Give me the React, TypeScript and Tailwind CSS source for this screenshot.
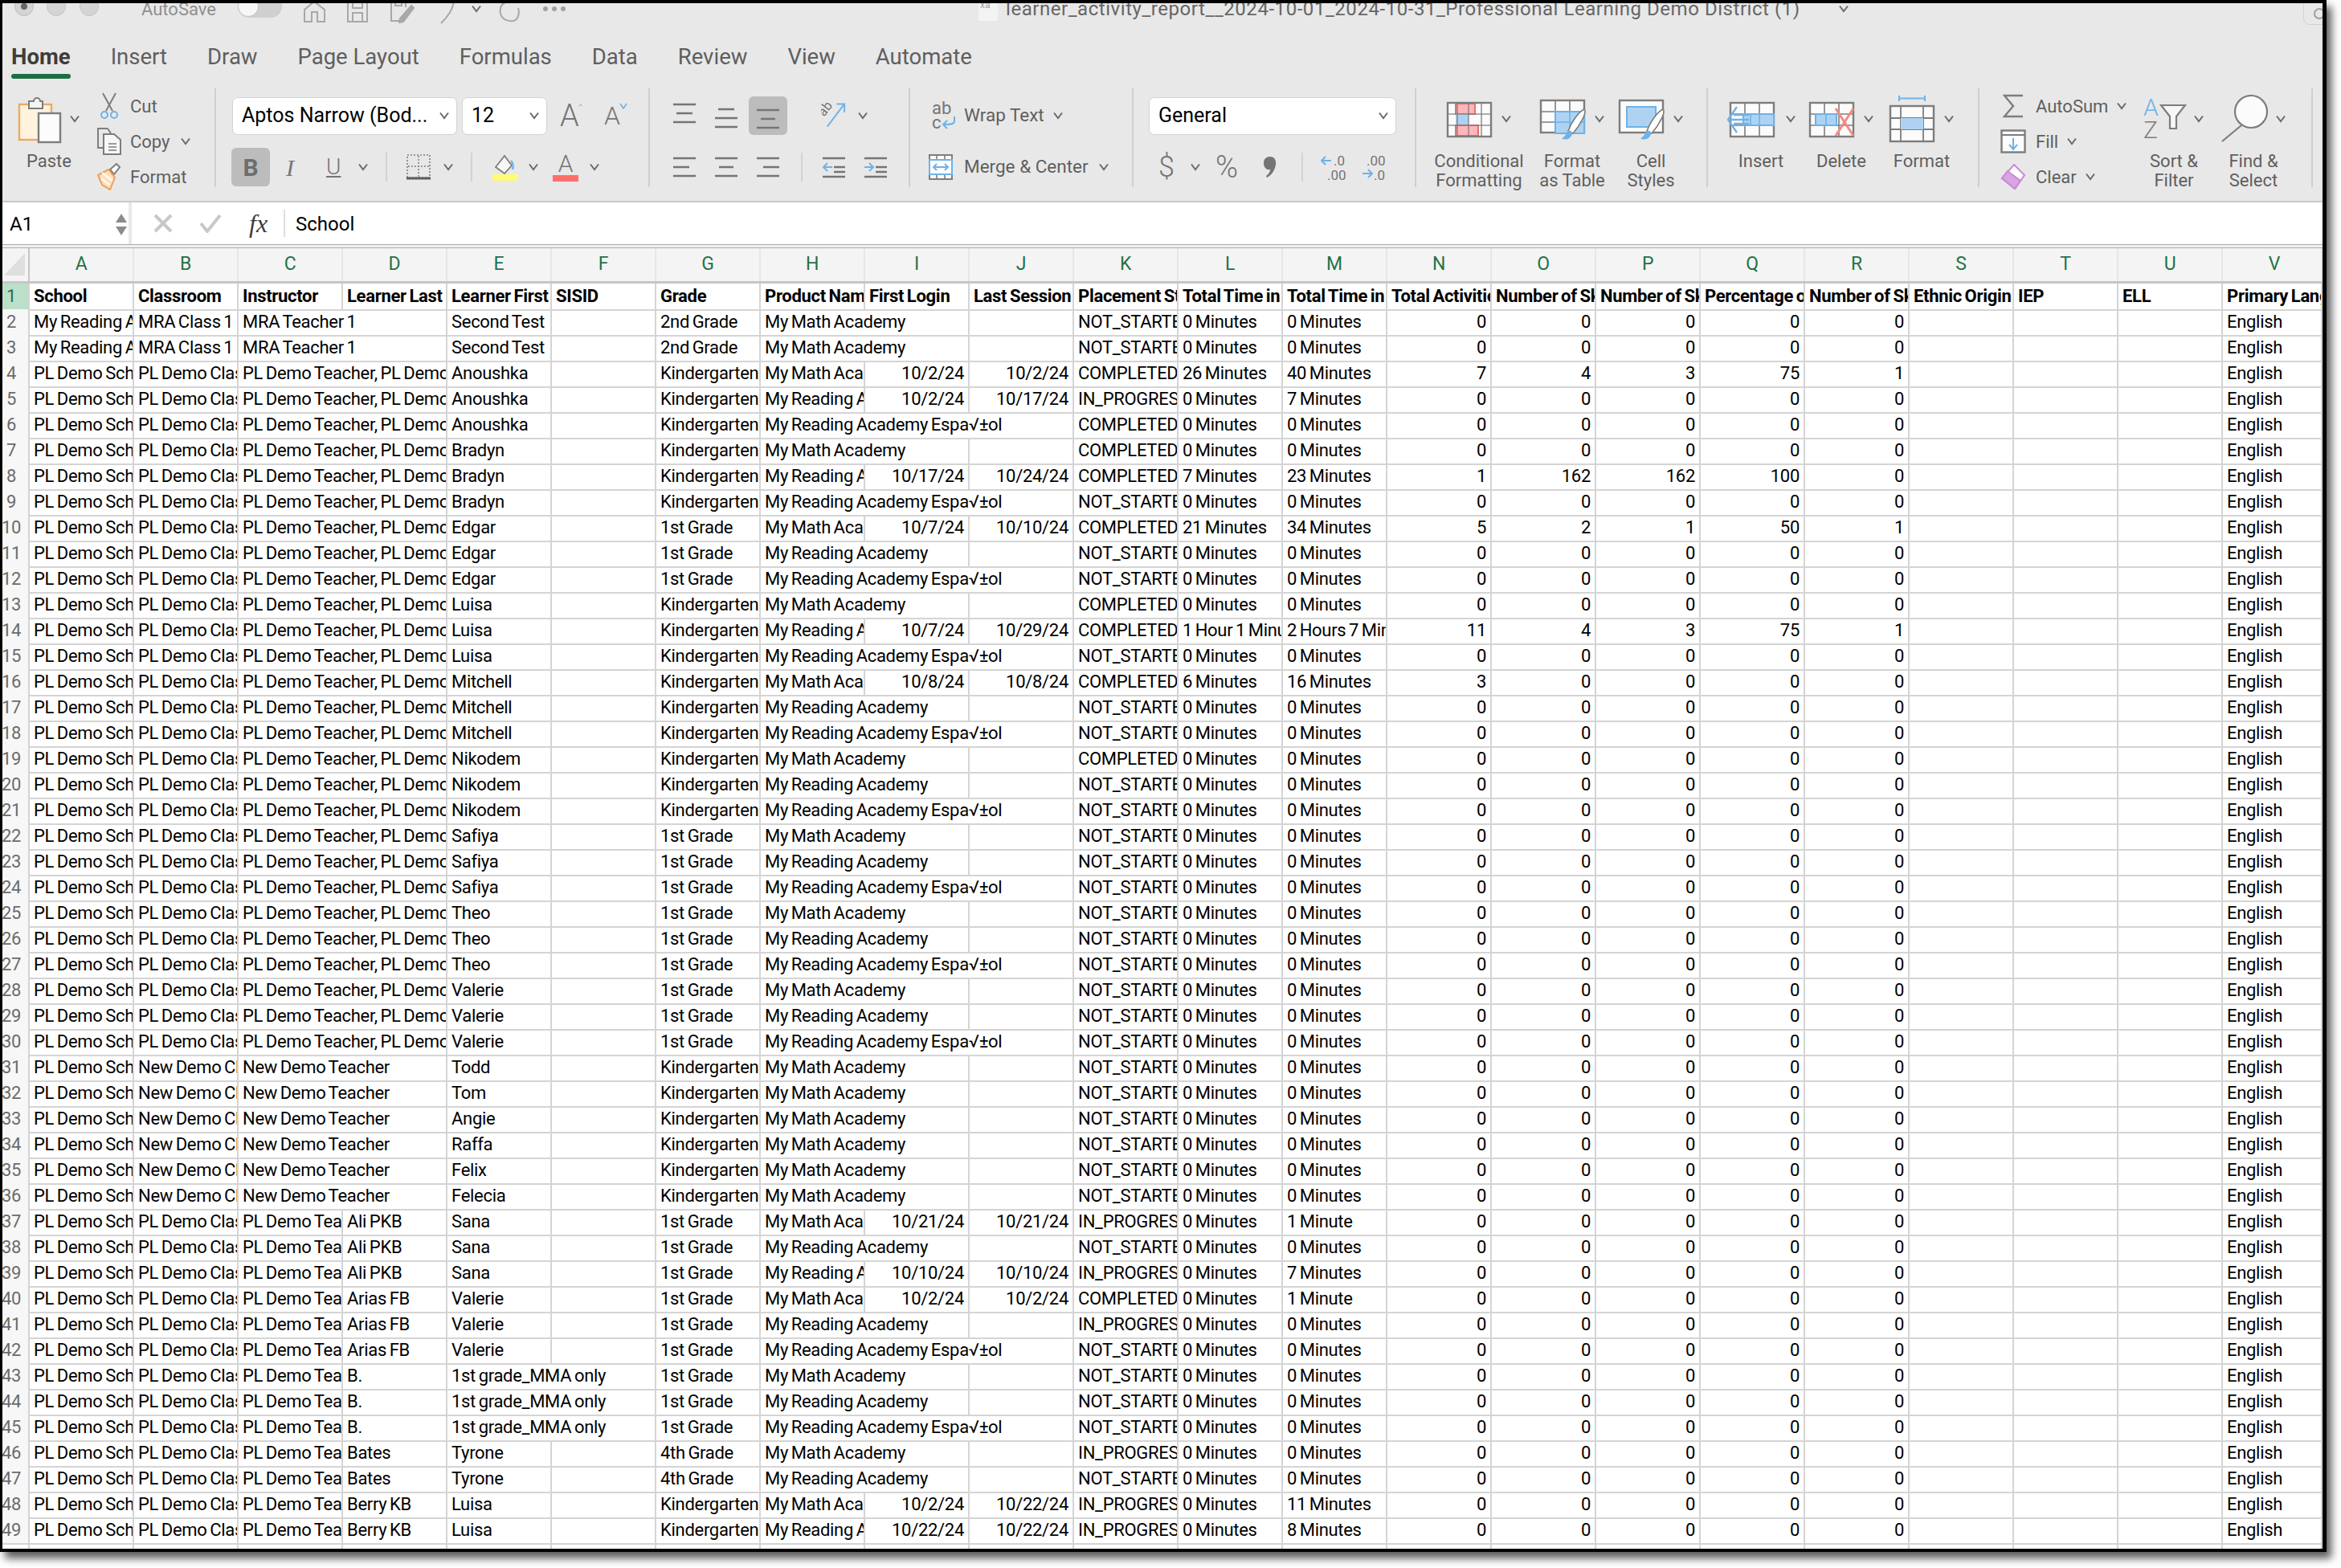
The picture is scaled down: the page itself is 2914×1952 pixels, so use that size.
import React from "react";

const G = "#7d7d7d";
const BL = "#6fb2e6";
const LB = "#aed3f2";

function Chev({ className = "" }: { className?: string }) {
  return (
    <svg viewBox="0 0 14 10" className={`w-[14px] h-[10px] shrink-0 ${className}`} fill="none" stroke="#6b6b6b" strokeWidth="2">
      <path d="M2 1.5 L7 8 L12 1.5" />
    </svg>
  );
}

function VSep({ className = "" }: { className?: string }) {
  return <div className={`w-[2px] h-[36px] bg-[#d2d2d2] shrink-0 ${className}`} />;
}

function Lines({ w = 28, top, mid, bot }: { w?: number; top: [number, number]; mid: [number, number]; bot: [number, number] }) {
  return (
    <svg viewBox="0 0 28 28" width={w} height="28" stroke="#757575" strokeWidth="2.4">
      <path d={`M${top[0]} 3H${top[1]}M${mid[0]} 14H${mid[1]}M${bot[0]} 25H${bot[1]}`} />
    </svg>
  );
}

function GridBase({ children, cols = [14, 28, 42], rows = [14, 28] }: { children?: React.ReactNode; cols?: number[]; rows?: number[] }) {
  return (
    <svg viewBox="0 0 60 50" width="60" height="50" className="shrink-0">
      <rect x="2" y="5" width="54" height="42" fill="#fbfbfb" />
      {children}
      <rect x="2" y="5" width="54" height="42" fill="none" stroke={G} strokeWidth="2.4" />
      {cols.map((c) => (
        <path key={c} d={`M${c + 2} 5V47`} stroke={G} strokeWidth="1.6" opacity="0.8" />
      ))}
      {rows.map((r) => (
        <path key={r} d={`M2 ${r + 5}H56`} stroke={G} strokeWidth="1.6" opacity="0.8" />
      ))}
    </svg>
  );
}

function Brush() {
  return (
    <g>
      <path d="M56 17 C60 20 51 37 42 47 L36 44 C40 33 49 20 56 17Z" fill="#fff" stroke={G} strokeWidth="1.6" />
      <path d="M36 44 C40 43 42 46 41 48 C39 55 31 56 28 53 C33 51 33 47 36 44Z" fill={BL} />
    </g>
  );
}

function CondIcon() {
  return (
    <GridBase cols={[12, 26, 42]}>
      <rect x="12" y="6" width="24" height="13" fill="#ffb6bb" stroke="#e6706a" strokeWidth="2" />
      <rect x="12" y="19" width="16" height="14" fill={LB} />
      <rect x="12" y="33" width="28" height="13" fill="#ffb6bb" stroke="#e6706a" strokeWidth="2" />
    </GridBase>
  );
}
function TableIcon() {
  return (
    <svg viewBox="0 0 60 58" width="60" height="58" className="shrink-0">
      <rect x="2" y="6" width="54" height="40" fill="#fbfbfb" stroke={G} strokeWidth="2.4" />
      <path d="M20 6V46M38 6V46M2 20H56M2 33H56" stroke={G} strokeWidth="1.6" />
      <rect x="20" y="20" width="36" height="27" fill={LB} stroke={BL} strokeWidth="2" />
      <path d="M38 20V46M20 33H56" stroke={BL} strokeWidth="1.6" />
      <Brush />
    </svg>
  );
}
function CellIcon() {
  return (
    <svg viewBox="0 0 60 58" width="60" height="58" className="shrink-0">
      <rect x="2" y="6" width="54" height="40" fill="#fbfbfb" stroke={G} strokeWidth="2.4" />
      <rect x="11" y="14" width="36" height="25" fill={LB} stroke={BL} strokeWidth="2" />
      <Brush />
    </svg>
  );
}
function InsertIcon() {
  return (
    <svg viewBox="0 0 66 50" width="66" height="50" className="shrink-0">
      <rect x="6" y="5" width="54" height="42" fill="#fbfbfb" stroke={G} strokeWidth="2.4" />
      <path d="M24 5V47M42 5V47M6 19H60M6 33H60" stroke={G} strokeWidth="1.6" />
      <rect x="22" y="19" width="38" height="14" fill={LB} stroke={BL} strokeWidth="2" />
      <path d="M42 19V33M31 19V33" stroke={BL} strokeWidth="1.6" />
      <path d="M14 10 L3 26 L14 42 M3 26 H29 M10 20H29 M10 31H29" fill="none" stroke={BL} strokeWidth="2.4" />
    </svg>
  );
}
function DeleteIcon() {
  return (
    <svg viewBox="0 0 60 50" width="60" height="50" className="shrink-0">
      <rect x="2" y="5" width="54" height="42" fill="#fbfbfb" stroke={G} strokeWidth="2.4" />
      <path d="M20 5V47M38 5V47M2 19H56M2 33H56" stroke={G} strokeWidth="1.6" />
      <rect x="9" y="19" width="26" height="14" fill={LB} stroke={BL} strokeWidth="2" />
      <path d="M22 19V33" stroke={BL} strokeWidth="1.6" />
      <path d="M34 12 L56 46 M56 12 L34 46" stroke="#f08a86" strokeWidth="3" />
    </svg>
  );
}
function FormatIcon() {
  return (
    <svg viewBox="0 0 60 62" width="60" height="62" className="shrink-0">
      <path d="M13 2V9M45 2V9M13 5.5H45" stroke={BL} strokeWidth="2" />
      <rect x="2" y="15" width="54" height="44" fill="#fbfbfb" stroke={G} strokeWidth="2.4" />
      <path d="M15 15V59M43 15V59M2 30H56M2 44H56" stroke={G} strokeWidth="1.8" />
      <rect x="15" y="30" width="28" height="14" fill={LB} />
    </svg>
  );
}

function TallBtn({ w, label, children, className = "" }: { w: string; label: string[]; children: React.ReactNode; className?: string }) {
  return (
    <div className={`flex flex-col items-center shrink-0 pt-[16px] ${w} ${className}`}>
      <div className="h-[64px] flex items-center justify-center">
        {children}
        <Chev className="ml-[8px]" />
      </div>
      <div className="mt-[9px] text-[22px] leading-[24px] text-[#5f5f5f] text-center whitespace-nowrap">
        {label.map((l) => (
          <div key={l}>{l}</div>
        ))}
      </div>
    </div>
  );
}

function Group({ w, children, className = "" }: { w: string; children: React.ReactNode; className?: string }) {
  return <div className={`shrink-0 h-full ${w} ${className}`}>{children}</div>;
}
function Sep() {
  return <div className="shrink-0 mt-[10px] w-[2px] h-[123px] bg-[#cfcfcf]" />;
}
function Row2({ children, className = "" }: { children: React.ReactNode; className?: string }) {
  return <div className={`h-[48px] flex items-center ${className}`}>{children}</div>;
}
function Select({ w, text, className = "" }: { w: string; text: string; className?: string }) {
  return (
    <div className={`${w} h-[47px] shrink-0 bg-white rounded-[7px] border border-[#d2d2d2] flex items-center pl-[11px] pr-[8px] justify-between ${className}`}>
      <span className="text-[25px] text-black whitespace-nowrap">{text}</span>
      <Chev />
    </div>
  );
}

function PasteIcon() {
  return (
    <svg viewBox="0 0 56 62" width="56" height="62" className="shrink-0">
      <rect x="2" y="13" width="40" height="44" fill="#fff3de" stroke="#eda961" strokeWidth="2.4" />
      <path d="M14 9 h6 a4 4 0 0 1 8 0 h3 v9 H14Z" fill="#f4f4f4" stroke={G} strokeWidth="2" />
      <rect x="26" y="24" width="27" height="36" fill="#fcfcfc" stroke={G} strokeWidth="2.4" />
    </svg>
  );
}
function Scissors() {
  return (
    <svg viewBox="0 0 26 34" width="26" height="34" fill="none">
      <path d="M5 1 L17 23 M21 1 L9 23" stroke={G} strokeWidth="2" />
      <circle cx="7" cy="28" r="4" stroke={BL} strokeWidth="2" />
      <circle cx="19" cy="28" r="4" stroke={BL} strokeWidth="2" />
    </svg>
  );
}
function CopyIcon() {
  return (
    <svg viewBox="0 0 32 34" width="32" height="34" fill="none" stroke={G} strokeWidth="2">
      <path d="M14 1H2V25H9" />
      <path d="M14 1L18 7" />
      <path d="M9 8H22L30 15V33H9Z" fill="#f6f6f6" />
      <path d="M15 20H25M15 24H25M15 28H25" strokeWidth="1.6" />
    </svg>
  );
}
function FormatPainter() {
  return (
    <svg viewBox="0 0 34 34" width="34" height="34" fill="none">
      <path d="M18 8 L26 1 L30 5 L23 14Z" fill="#fff" stroke={G} strokeWidth="2" />
      <path d="M3 15 L16 8 L24 18 L18 33 L8 27Z" fill="#ffdfb9" stroke="#eba15b" strokeWidth="2" />
      <path d="M8 12 L21 22 M7 19 L17 27" stroke="#fff" strokeWidth="2" />
    </svg>
  );
}
function Sigma() {
  return (
    <svg viewBox="0 0 28 30" width="28" height="30" fill="none" stroke={G} strokeWidth="2.4">
      <path d="M26 2H3L14 15L3 28H26" />
    </svg>
  );
}
function FillIcon() {
  return (
    <svg viewBox="0 0 32 30" width="32" height="30" fill="none">
      <rect x="1.5" y="1.5" width="29" height="27" fill="#fcfcfc" stroke={G} strokeWidth="2.4" />
      <path d="M1.5 7H30" stroke={G} strokeWidth="2" />
      <path d="M16 11V24M11 19L16 25L21 19" stroke={BL} strokeWidth="2" />
    </svg>
  );
}
function Eraser() {
  return (
    <svg viewBox="0 0 32 32" width="32" height="32">
      <path d="M17 1 L30 14 L18 31 L2 18Z" fill="#fff" stroke="#c88ad6" strokeWidth="2" />
      <path d="M9 9 L25 21 L18 31 L2 18Z" fill="#d9a5e3" stroke="#c88ad6" strokeWidth="2" />
    </svg>
  );
}
function SortIcon() {
  return (
    <div className="flex items-center shrink-0">
      <div className="flex flex-col w-[20px] text-[30px] leading-[28px] font-light">
        <span className="text-[#6fb2e6]">A</span>
        <span className="text-[#7d7d7d]">Z</span>
      </div>
      <svg viewBox="0 0 34 34" width="34" height="34" fill="#f7f7f7" stroke={G} strokeWidth="2.2" className="mb-[6px]">
        <path d="M2 3H32L21 17V32H13V17Z" />
      </svg>
    </div>
  );
}
function Magnifier() {
  return (
    <svg viewBox="0 0 60 60" width="60" height="60" fill="#fbfbfb" stroke={G} strokeWidth="2.2" className="shrink-0">
      <ellipse cx="38" cy="21" rx="20" ry="20" />
      <path d="M26 38 L2 58" fill="none" />
    </svg>
  );
}

function Ribbon() {
  return (
    <div className="h-[150px] flex items-start">
      {/* Clipboard */}
      <Group w="w-[264px]" className="flex">
        <TallBtn w="w-[88px]" label={["Paste"]} className="ml-[14px]">
          <PasteIcon />
        </TallBtn>
        <div className="ml-[13px] pt-[10px] text-[22px] text-[#5f5f5f]">
          <div className="h-[44px] flex items-center">
            <div className="w-[36px] flex justify-center"><Scissors /></div>
            <span className="ml-[8px]">Cut</span>
          </div>
          <div className="h-[44px] flex items-center">
            <div className="w-[36px] flex justify-center"><CopyIcon /></div>
            <span className="ml-[8px]">Copy</span>
            <Chev className="ml-[12px]" />
          </div>
          <div className="h-[44px] flex items-center">
            <div className="w-[36px] flex justify-center"><FormatPainter /></div>
            <span className="ml-[8px]">Format</span>
          </div>
        </div>
      </Group>
      <Sep />
      {/* Font */}
      <Group w="w-[538px]" className="pt-[20px]">
        <Row2>
          <Select w="w-[280px] ml-[20px]" text="Aptos Narrow (Bod..." />
          <Select w="w-[106px] ml-[6px]" text="12" />
          <div className="ml-[16px] w-[28px] flex items-start text-[#757575] text-[38px] font-light leading-none">
            A
            <svg viewBox="0 0 10 8" className="w-[10px] h-[8px] -ml-[1px] mt-[2px]" fill="none" stroke={BL} strokeWidth="1.6"><path d="M1 7L5 1L9 7" /></svg>
          </div>
          <div className="ml-[27px] w-[26px] flex items-start text-[#757575] text-[32px] font-light leading-none">
            A
            <svg viewBox="0 0 10 8" className="w-[10px] h-[8px] -ml-[1px] shrink-0" fill="none" stroke={BL} strokeWidth="1.6"><path d="M1 1L5 7L9 1" /></svg>
          </div>
        </Row2>
        <Row2 className="mt-[16px]">
          <div className="ml-[19px] w-[48px] h-[48px] rounded-[6px] bg-[#bcbcbc] flex items-center justify-center text-[30px] font-bold text-[#6d6d6d] font-['Roboto',sans-serif]">B</div>
          <span className="ml-[20px] w-[14px] text-[30px] italic font-['Liberation_Serif',serif] text-[#757575] font-light">I</span>
          <span className="ml-[36px] w-[18px] text-[28px] font-light underline text-[#757575]">U</span>
          <Chev className="ml-[21px]" />
          <VSep className="ml-[21px]" />
          <svg viewBox="0 0 30 32" width="30" height="32" className="ml-[24px] shrink-0" fill="none">
            <rect x="1" y="1" width="28" height="28" stroke={G} strokeWidth="1.6" strokeDasharray="2 2" />
            <path d="M15 2V28M2 15H28" stroke={G} strokeWidth="1.4" strokeDasharray="2 2" />
            <path d="M0 30H30" stroke="#5d5d5d" strokeWidth="3" />
          </svg>
          <Chev className="ml-[15px]" />
          <VSep className="ml-[21px]" />
          <svg viewBox="0 0 33 34" width="33" height="34" className="ml-[24px] shrink-0">
            <path d="M5 17 L16 3 L25 15 L16 25 Z" fill="#f7f7f7" stroke={G} strokeWidth="1.8" />
            <path d="M24 9 C27 12 27 16 26 20" stroke={BL} strokeWidth="2.4" fill="none" />
            <rect x="1" y="26" width="31" height="8" fill="#fffb75" />
          </svg>
          <Chev className="ml-[12px]" />
          <div className="ml-[17px] w-[32px] flex flex-col items-center">
            <span className="text-[30px] leading-[28px] text-[#757575] font-light">A</span>
            <div className="w-[32px] h-[8px] bg-[#ff6f6a]" />
          </div>
          <Chev className="ml-[13px]" />
        </Row2>
      </Group>
      <Sep />
      {/* Alignment */}
      <Group w="w-[322px]" className="pt-[20px]">
        <Row2>
          <div className="ml-[29px] -mt-[6px]"><Lines top={[0, 28]} mid={[4, 24]} bot={[0, 28]} /></div>
          <div className="ml-[24px] mt-[6px]"><Lines top={[4, 24]} mid={[0, 28]} bot={[0, 28]} /></div>
          <div className="ml-[14px] w-[48px] h-[48px] rounded-[6px] bg-[#bcbcbc] flex items-end justify-center pb-[6px]"><Lines top={[0, 28]} mid={[5, 23]} bot={[0, 28]} /></div>
          <svg viewBox="0 0 34 36" width="33" height="36" className="ml-[42px] shrink-0" fill="none">
            <path d="M8 32 L30 3 M20 3 H30 V14" stroke={BL} strokeWidth="2" />
            <text x="0" y="16" fontSize="17" fill="#757575" transform="rotate(-52 6 14)">ab</text>
          </svg>
          <Chev className="ml-[12px]" />
        </Row2>
        <Row2 className="mt-[16px]">
          <div className="ml-[29px]"><Lines top={[0, 28]} mid={[0, 20]} bot={[0, 28]} /></div>
          <div className="ml-[24px]"><Lines top={[0, 28]} mid={[5, 23]} bot={[0, 28]} /></div>
          <div className="ml-[24px]"><Lines top={[0, 28]} mid={[8, 28]} bot={[0, 28]} /></div>
          <VSep className="ml-[27px]" />
          <svg viewBox="0 0 28 28" width="28" height="28" className="ml-[25px] shrink-0" fill="none">
            <path d="M0 3H28M14 14H28M14 20H28M0 26H28" stroke="#757575" strokeWidth="2.4" />
            <path d="M12 14H1M6 9L1 14L6 19" stroke={BL} strokeWidth="2" />
          </svg>
          <svg viewBox="0 0 28 28" width="28" height="28" className="ml-[24px] shrink-0" fill="none">
            <path d="M0 3H28M14 14H28M14 20H28M0 26H28" stroke="#757575" strokeWidth="2.4" />
            <path d="M0 14H11M6 9L11 14L6 19" stroke={BL} strokeWidth="2" />
          </svg>
        </Row2>
      </Group>
      <Sep />
      {/* Wrap */}
      <Group w="w-[276px]" className="pt-[20px] text-[22.5px] text-[#5f5f5f]">
        <Row2>
          <svg viewBox="0 0 30 36" width="30" height="36" className="ml-[27px] shrink-0" fill="none">
            <text x="0" y="16" fontSize="22" fill="#757575">ab</text>
            <text x="0" y="34" fontSize="22" fill="#757575">c</text>
            <path d="M28 19 V25 C28 29 22 29 15 29 M19 24 L14 29 L19 34" stroke={BL} strokeWidth="2" />
          </svg>
          <span className="ml-[10px] whitespace-nowrap">Wrap Text</span>
          <Chev className="ml-[10px]" />
        </Row2>
        <Row2 className="mt-[16px]">
          <svg viewBox="0 0 30 32" width="30" height="32" className="ml-[23px] shrink-0" fill="none">
            <rect x="1" y="1" width="28" height="30" fill="#fbfbfb" stroke={G} strokeWidth="2" />
            <path d="M10 1V7M20 1V7M10 25V31M20 25V31" stroke={G} strokeWidth="1.6" />
            <rect x="1" y="7" width="28" height="18" fill="#fff" stroke={BL} strokeWidth="2" />
            <path d="M6 16H24M10 12L6 16L10 20M20 12L24 16L20 20" stroke={BL} strokeWidth="2" />
          </svg>
          <span className="ml-[14px] whitespace-nowrap">Merge &amp; Center</span>
          <Chev className="ml-[12px]" />
        </Row2>
      </Group>
      <Sep />
      {/* Number */}
      <Group w="w-[350px]" className="pt-[20px]">
        <Row2>
          <Select w="w-[308px] ml-[19px]" text="General" />
        </Row2>
        <Row2 className="mt-[16px] text-[#757575]">
          <span className="ml-[31px] w-[16px] text-[36px] font-light leading-none">$</span>
          <Chev className="ml-[23px]" />
          <span className="ml-[18px] w-[30px] text-[38px] font-light leading-none tracking-[-1px]">%</span>
          <svg viewBox="0 0 16 28" width="16" height="28" className="ml-[30px] shrink-0" fill="#757575">
            <path d="M8 1 C13 1 16 5 15 11 C14 18 10 24 4 27 L3 25 C6 23 8 20 8 17 C3 18 0 14 0 9 C0 4 3 1 8 1Z" />
          </svg>
          <VSep className="ml-[31px]" />
          <svg viewBox="0 0 34 34" width="34" height="34" className="ml-[22px] shrink-0" fill="none">
            <path d="M1 9H13M6 4L1 9L6 14" stroke={BL} strokeWidth="2" />
            <text x="16" y="15" fontSize="17" fill="#757575">.0</text>
            <text x="8" y="33" fontSize="17" fill="#757575">.00</text>
          </svg>
          <svg viewBox="0 0 34 34" width="34" height="34" className="ml-[17px] shrink-0" fill="none">
            <text x="6" y="15" fontSize="17" fill="#757575">.00</text>
            <path d="M1 25H13M8 20L13 25L8 30" stroke={BL} strokeWidth="2" />
            <text x="15" y="33" fontSize="17" fill="#757575">.0</text>
          </svg>
        </Row2>
      </Group>
      <Sep />
      {/* Styles */}
      <Group w="w-[361px]" className="flex pl-[10px]">
        <TallBtn w="w-[136px]" label={["Conditional", "Formatting"]}><CondIcon /></TallBtn>
        <TallBtn w="w-[96px]" label={["Format", "as Table"]}><TableIcon /></TallBtn>
        <TallBtn w="w-[100px]" label={["Cell", "Styles"]}><CellIcon /></TallBtn>
      </Group>
      <Sep />
      {/* Cells */}
      <Group w="w-[336px]" className="flex pl-[16px]">
        <TallBtn w="w-[100px]" label={["Insert"]}><InsertIcon /></TallBtn>
        <TallBtn w="w-[100px]" label={["Delete"]}><DeleteIcon /></TallBtn>
        <TallBtn w="w-[100px]" label={["Format"]}><FormatIcon /></TallBtn>
      </Group>
      <Sep />
      {/* Editing */}
      <Group w="w-[413px]" className="flex">
        <div className="w-[198px] shrink-0 pt-[10px] pl-[26px] text-[22px] text-[#5f5f5f]">
          <div className="h-[44px] flex items-center">
            <div className="w-[32px] flex justify-center"><Sigma /></div>
            <span className="ml-[12px]">AutoSum</span>
            <Chev className="ml-[10px]" />
          </div>
          <div className="h-[44px] flex items-center">
            <div className="w-[32px] flex justify-center"><FillIcon /></div>
            <span className="ml-[12px]">Fill</span>
            <Chev className="ml-[10px]" />
          </div>
          <div className="h-[44px] flex items-center">
            <div className="w-[32px] flex justify-center"><Eraser /></div>
            <span className="ml-[12px]">Clear</span>
            <Chev className="ml-[10px]" />
          </div>
        </div>
        <TallBtn w="w-[88px]" label={["Sort &", "Filter"]}><SortIcon /></TallBtn>
        <TallBtn w="w-[110px]" label={["Find &", "Select"]}><Magnifier /></TallBtn>
      </Group>
      <Sep />
    </div>
  );
}

function TitleBar() {
  const stroke = "#a8a8a8";
  return (
    <div className="h-[46px]">
      <div className="h-[14px] flex items-center pl-[15px]">
        <div className="-mt-[6px] w-[24px] h-[24px] rounded-full bg-[#d4d4d4] border border-[#bcbcbc] flex items-center justify-center shrink-0">
          <div className="w-[8px] h-[8px] rounded-full bg-[#666]" />
        </div>
        <div className="-mt-[6px] ml-[16px] w-[24px] h-[24px] rounded-full bg-[#d4d4d4] border border-[#c4c4c4] shrink-0" />
        <div className="-mt-[6px] ml-[17px] w-[24px] h-[24px] rounded-full bg-[#d4d4d4] border border-[#c4c4c4] shrink-0" />
        <span className="ml-[53px] text-[22px] text-[#8f8f8f] whitespace-nowrap w-[100px]">AutoSave</span>
        <div className="ml-[20px] w-[55px] h-[28px] rounded-full bg-[#cfcfcf] shrink-0 -mt-[6px] flex items-center">
          <div className="w-[26px] h-[26px] rounded-full bg-[#f7f7f7] border border-[#c4c4c4]" />
        </div>
        <svg viewBox="0 0 29 28" width="29" height="28" className="ml-[26px] shrink-0 mt-[6px]" fill="none" stroke={stroke} strokeWidth="2">
          <path d="M2 12 L14 2 L27 12 V27 H18 V15 H11 V27 H2Z" />
        </svg>
        <svg viewBox="0 0 28 28" width="28" height="28" className="ml-[25px] shrink-0 mt-[6px]" fill="none" stroke={stroke} strokeWidth="2">
          <path d="M2 2H26V27H2Z M8 2V10H20V2 M8 27V16H20V27" />
        </svg>
        <svg viewBox="0 0 31 30" width="31" height="30" className="ml-[26px] shrink-0 mt-[6px]" fill="none" stroke={stroke} strokeWidth="2">
          <path d="M2 2H20V10 M2 2V27H12 M7 2V8H15V2" />
          <path d="M27 8L30 11L17 28L12 29L13 24Z" fill={stroke} />
        </svg>
        <svg viewBox="0 0 20 32" width="20" height="32" className="ml-[30px] shrink-0 mt-[6px]" fill="none" stroke={stroke} strokeWidth="2">
          <path d="M3 1H18C20 10 14 20 3 31" />
        </svg>
        <Chev className="ml-[20px]" />
        <svg viewBox="0 0 27 28" width="27" height="28" className="ml-[21px] shrink-0 mt-[6px]" fill="none" stroke={stroke} strokeWidth="2">
          <path d="M8 3 C2 6 1 12 2 17 C4 25 13 27 18 26 C24 25 26 16 24 10" />
        </svg>
        <div className="ml-[28px] flex gap-[5px] shrink-0">
          <div className="w-[6px] h-[6px] rounded-full bg-[#a0a0a0]" />
          <div className="w-[6px] h-[6px] rounded-full bg-[#a0a0a0]" />
          <div className="w-[6px] h-[6px] rounded-full bg-[#a0a0a0]" />
        </div>
        <div className="ml-[514px] w-[24px] h-[30px] bg-[#f3f3f3] shrink-0 text-[12px] text-[#a0a0a0] leading-[20px] pl-[2px]">xa</div>
        <span className="ml-[10px] text-[24px] text-[#666] whitespace-nowrap w-[1028px] tracking-[0.55px]">learner_activity_report__2024-10-01_2024-10-31_Professional Learning Demo District (1)</span>
        <Chev className="ml-[8px]" />
        <div className="ml-auto -mr-[10px] w-[34px] h-[40px] rounded-[8px] border border-[#d2d2d2] flex items-start pl-[12px] pt-[18px] shrink-0">
          <div className="w-[14px] h-[14px] rounded-full border-2 border-[#a0a0a0]" />
        </div>
      </div>
    </div>
  );
}

function Tabs() {
  const tabs = ["Home", "Insert", "Draw", "Page Layout", "Formulas", "Data", "Review", "View", "Automate"];
  return (
    <div className="h-[50px] flex gap-[50px] pl-[11px] pt-[5px]">
      {tabs.map((t, i) => (
        <div key={t} className="flex flex-col shrink-0">
          <span className={`text-[27.5px] leading-[32px] whitespace-nowrap ${i === 0 ? "font-bold text-[#3d3d3d]" : "text-[#5f5f5f]"}`}>{t}</span>
          <div className={`mt-[5px] h-[6px] rounded-full ${i === 0 ? "bg-[#1e6e42]" : ""}`} />
        </div>
      ))}
    </div>
  );
}

function FormulaBar() {
  return (
    <div className="shrink-0">
      <div className="h-[2px] bg-[#c9c9c9]" />
      <div className="h-[52px] bg-white flex">
        <div className="w-[157px] pt-[2px] flex items-center justify-between pl-[9px] pr-[2px] bg-white">
          <span className="text-[24px] text-black">A1</span>
          <div className="flex flex-col gap-[5px]">
            <div className="w-0 h-0 border-x-[7px] border-x-transparent border-b-[11px] border-b-[#8c8c8c]" />
            <div className="w-0 h-0 border-x-[7px] border-x-transparent border-t-[11px] border-t-[#8c8c8c]" />
          </div>
        </div>
        <div className="w-[4px] bg-[#e8e8e8]" />
        <svg viewBox="0 0 24 24" width="24" height="24" className="ml-[27px] self-center shrink-0" fill="none" stroke="#c8c8c8" strokeWidth="4">
          <path d="M2 2L22 22M22 2L2 22" />
        </svg>
        <svg viewBox="0 0 28 24" width="28" height="24" className="ml-[33px] self-center shrink-0" fill="none" stroke="#c8c8c8" strokeWidth="4">
          <path d="M2 12L10 22L26 2" />
        </svg>
        <span className="ml-[34px] w-[26px] self-center text-[32px] italic font-['Liberation_Serif',serif] text-[#3c3c3c] whitespace-nowrap">fx</span>
        <div className="ml-[17px] w-[2px] h-[34px] bg-[#dedede] self-center" />
        <span className="ml-[13px] mt-[1px] self-center text-[24px] text-black">School</span>
      </div>
      <div className="h-[1px] bg-[#ababab]" />
      <div className="h-[3px] bg-[#f0f0f0]" />
      <div className="h-[1px] bg-[#ababab]" />
    </div>
  );
}

const GRID = "grid grid-cols-[34px_repeat(21,130px)_124px]";
const LINE = "border-r-2 border-b-2 border-[#d4d4d4]";
const LETTERS = "ABCDEFGHIJKLMNOPQRSTUV".split("");

function ColHeader() {
  return (
    <div className={`${GRID} h-[44px] bg-[#f4f4f4] border-b-[3px] border-[#c6c6c6]`}>
      <div className="border-r-2 border-[#c6c6c6] flex items-center justify-center">
        <div className="w-0 h-0 -mt-[2px] -ml-[2px] border-l-[26px] border-l-transparent border-b-[28px] border-b-[#dfdfdf]" />
      </div>
      {LETTERS.map((l) => (
        <div key={l} className={`border-r-2 border-[#e6e6e6] flex items-center justify-center text-[23px] text-[#1f7346] ${l === "V" ? "pl-[6px]" : ""}`}>
          {l}
        </div>
      ))}
    </div>
  );
}

type C = { t?: string; r?: boolean; span?: 2 | 3 };

function Cell({ c, bold }: { c: C; bold?: boolean }) {
  const span = c.span === 3 ? "col-span-3" : c.span === 2 ? "col-span-2" : "";
  return (
    <div className={`${LINE} ${span} overflow-hidden whitespace-nowrap px-[5px] leading-[32px] text-[22px] ${bold ? "font-bold" : ""} ${c.r ? "text-right" : "text-left"}`}>
      {c.t ?? ""}
    </div>
  );
}

function RowHead({ n }: { n: number }) {
  return (
    <div className="border-r-2 border-b-2 border-[#d4d4d4] bg-[#f7f7f7] flex justify-center pr-[10px] text-[22px] leading-[32px] text-[#6b6b6b]">
      {n}
    </div>
  );
}

const K = "Kindergarten";
const MA = "My Math Academy";
const RA = "My Reading Academy";
const ES = "My Reading Academy Espa√±ol";
const NS = "NOT_STARTED";
const CP = "COMPLETED";
const IP = "IN_PROGRESS";
const T1 = "PL Demo Teacher, PL Demo Teacher";

type D = {
  a?: string; b?: string; c?: string; d?: string; e: string; g: string; h: string;
  i?: string; j?: string; k: string; l?: string; m?: string; n?: number[];
};

const rows: D[] = [
  { a: RA, b: "MRA Class 1", c: "MRA Teacher 1", e: "Second Test", g: "2nd Grade", h: MA, k: NS },
  { a: RA, b: "MRA Class 1", c: "MRA Teacher 1", e: "Second Test", g: "2nd Grade", h: MA, k: NS },
  { e: "Anoushka", g: K, h: MA, i: "10/2/24", j: "10/2/24", k: CP, l: "26 Minutes", m: "40 Minutes", n: [7, 4, 3, 75, 1] },
  { e: "Anoushka", g: K, h: RA, i: "10/2/24", j: "10/17/24", k: IP, m: "7 Minutes" },
  { e: "Anoushka", g: K, h: ES, k: CP },
  { e: "Bradyn", g: K, h: MA, k: CP },
  { e: "Bradyn", g: K, h: RA, i: "10/17/24", j: "10/24/24", k: CP, l: "7 Minutes", m: "23 Minutes", n: [1, 162, 162, 100, 0] },
  { e: "Bradyn", g: K, h: ES, k: NS },
  { e: "Edgar", g: "1st Grade", h: MA, i: "10/7/24", j: "10/10/24", k: CP, l: "21 Minutes", m: "34 Minutes", n: [5, 2, 1, 50, 1] },
  { e: "Edgar", g: "1st Grade", h: RA, k: NS },
  { e: "Edgar", g: "1st Grade", h: ES, k: NS },
  { e: "Luisa", g: K, h: MA, k: CP },
  { e: "Luisa", g: K, h: RA, i: "10/7/24", j: "10/29/24", k: CP, l: "1 Hour 1 Minute", m: "2 Hours 7 Minutes", n: [11, 4, 3, 75, 1] },
  { e: "Luisa", g: K, h: ES, k: NS },
  { e: "Mitchell", g: K, h: MA, i: "10/8/24", j: "10/8/24", k: CP, l: "6 Minutes", m: "16 Minutes", n: [3, 0, 0, 0, 0] },
  { e: "Mitchell", g: K, h: RA, k: NS },
  { e: "Mitchell", g: K, h: ES, k: NS },
  { e: "Nikodem", g: K, h: MA, k: CP },
  { e: "Nikodem", g: K, h: RA, k: NS },
  { e: "Nikodem", g: K, h: ES, k: NS },
  { e: "Safiya", g: "1st Grade", h: MA, k: NS },
  { e: "Safiya", g: "1st Grade", h: RA, k: NS },
  { e: "Safiya", g: "1st Grade", h: ES, k: NS },
  { e: "Theo", g: "1st Grade", h: MA, k: NS },
  { e: "Theo", g: "1st Grade", h: RA, k: NS },
  { e: "Theo", g: "1st Grade", h: ES, k: NS },
  { e: "Valerie", g: "1st Grade", h: MA, k: NS },
  { e: "Valerie", g: "1st Grade", h: RA, k: NS },
  { e: "Valerie", g: "1st Grade", h: ES, k: NS },
  ...["Todd", "Tom", "Angie", "Raffa", "Felix", "Felecia"].map((e) => ({
    b: "New Demo Classroom", c: "New Demo Teacher", e, g: K, h: MA, k: NS,
  })),
  { c: "PL Demo Teacher", d: "Ali PKB", e: "Sana", g: "1st Grade", h: MA, i: "10/21/24", j: "10/21/24", k: IP, m: "1 Minute" },
  { c: "PL Demo Teacher", d: "Ali PKB", e: "Sana", g: "1st Grade", h: RA, k: NS },
  { c: "PL Demo Teacher", d: "Ali PKB", e: "Sana", g: "1st Grade", h: RA, i: "10/10/24", j: "10/10/24", k: IP, m: "7 Minutes" },
  { c: "PL Demo Teacher", d: "Arias FB", e: "Valerie", g: "1st Grade", h: MA, i: "10/2/24", j: "10/2/24", k: CP, m: "1 Minute" },
  { c: "PL Demo Teacher", d: "Arias FB", e: "Valerie", g: "1st Grade", h: RA, k: IP },
  { c: "PL Demo Teacher", d: "Arias FB", e: "Valerie", g: "1st Grade", h: ES, k: NS },
  { c: "PL Demo Teacher", d: "B.", e: "1st grade_MMA only", g: "1st Grade", h: MA, k: NS },
  { c: "PL Demo Teacher", d: "B.", e: "1st grade_MMA only", g: "1st Grade", h: RA, k: NS },
  { c: "PL Demo Teacher", d: "B.", e: "1st grade_MMA only", g: "1st Grade", h: ES, k: NS },
  { c: "PL Demo Teacher", d: "Bates", e: "Tyrone", g: "4th Grade", h: MA, k: IP },
  { c: "PL Demo Teacher", d: "Bates", e: "Tyrone", g: "4th Grade", h: RA, k: NS },
  { c: "PL Demo Teacher", d: "Berry KB", e: "Luisa", g: K, h: MA, i: "10/2/24", j: "10/22/24", k: IP, m: "11 Minutes" },
  { c: "PL Demo Teacher", d: "Berry KB", e: "Luisa", g: K, h: RA, i: "10/22/24", j: "10/22/24", k: IP, m: "8 Minutes" },
];

function DataRow({ d, n }: { d: D; n: number }) {
  const nums = d.n ?? [0, 0, 0, 0, 0];
  const hasDate = !!d.i;
  const long = d.e.length > 14;
  return (
    <div className={`${GRID} h-[32px]`}>
      <RowHead n={n} />
      <Cell c={{ t: d.a ?? "PL Demo School" }} />
      <Cell c={{ t: d.b ?? "PL Demo Classroom" }} />
      {d.d ? (
        <>
          <Cell c={{ t: d.c }} />
          <Cell c={{ t: d.d }} />
        </>
      ) : (
        <Cell c={{ t: d.c ?? T1, span: 2 }} />
      )}
      {long ? (
        <Cell c={{ t: d.e, span: 2 }} />
      ) : (
        <>
          <Cell c={{ t: d.e }} />
          <Cell c={{}} />
        </>
      )}
      <Cell c={{ t: d.g }} />
      {hasDate ? (
        <>
          <Cell c={{ t: d.h }} />
          <Cell c={{ t: d.i, r: true }} />
          <Cell c={{ t: d.j, r: true }} />
        </>
      ) : d.h === ES ? (
        <Cell c={{ t: d.h, span: 3 }} />
      ) : (
        <>
          <Cell c={{ t: d.h, span: 2 }} />
          <Cell c={{}} />
        </>
      )}
      <Cell c={{ t: d.k }} />
      <Cell c={{ t: d.l ?? "0 Minutes" }} />
      <Cell c={{ t: d.m ?? "0 Minutes" }} />
      <Cell c={{ t: String(nums[0]), r: true }} />
      <Cell c={{ t: String(nums[1]), r: true }} />
      <Cell c={{ t: String(nums[2]), r: true }} />
      <Cell c={{ t: String(nums[3]), r: true }} />
      <Cell c={{ t: String(nums[4]), r: true }} />
      <Cell c={{}} />
      <Cell c={{}} />
      <Cell c={{}} />
      <Cell c={{ t: "English" }} />
    </div>
  );
}

const HEAD = [
  "School", "Classroom", "Instructor", "Learner Last Name", "Learner First Name", "SISID", "Grade",
  "Product Name", "First Login", "Last Session", "Placement Status", "Total Time in Lessons", "Total Time in App",
  "Total Activities", "Number of Skills", "Number of Skills", "Percentage of Skills", "Number of Skills",
  "Ethnic Origin", "IEP", "ELL", "Primary Language",
];

function Sheet() {
  return (
    <div className="flex-1 min-h-0 overflow-hidden bg-white text-black tracking-[-0.3px] [word-spacing:-1.5px]">
      <ColHeader />
      <div className={`${GRID} h-[32px]`}>
        <div className="bg-[#bcdfc9] border-r-2 border-[#d4d4d4] border-b-2 border-b-[#1f7346] flex justify-center pr-[10px] text-[22px] leading-[32px] text-[#1f7346]">1</div>
        {HEAD.map((h, i) => (
          <Cell key={i} c={{ t: h }} bold />
        ))}
      </div>
      {rows.map((d, i) => (
        <DataRow key={i} d={d} n={i + 2} />
      ))}
      <div className={`${GRID} h-[32px]`}>
        <div className={LINE} />
        {LETTERS.map((l) => (
          <div key={l} className={LINE} />
        ))}
      </div>
    </div>
  );
}

export default function App() {
  return (
    <div className="w-[2914px] h-[1952px] bg-white overflow-hidden font-['Roboto',sans-serif]">
      <div className="w-[2896px] h-[1932px] border-l-[3px] border-t-[4px] border-r-[5px] border-b-[4px] border-black shadow-[6px_8px_10px_rgba(0,0,0,0.65)] overflow-hidden flex flex-col bg-[#e8e8e8]">
        <TitleBar />
        <Tabs />
        <Ribbon />
        <FormulaBar />
        <Sheet />
      </div>
    </div>
  );
}
